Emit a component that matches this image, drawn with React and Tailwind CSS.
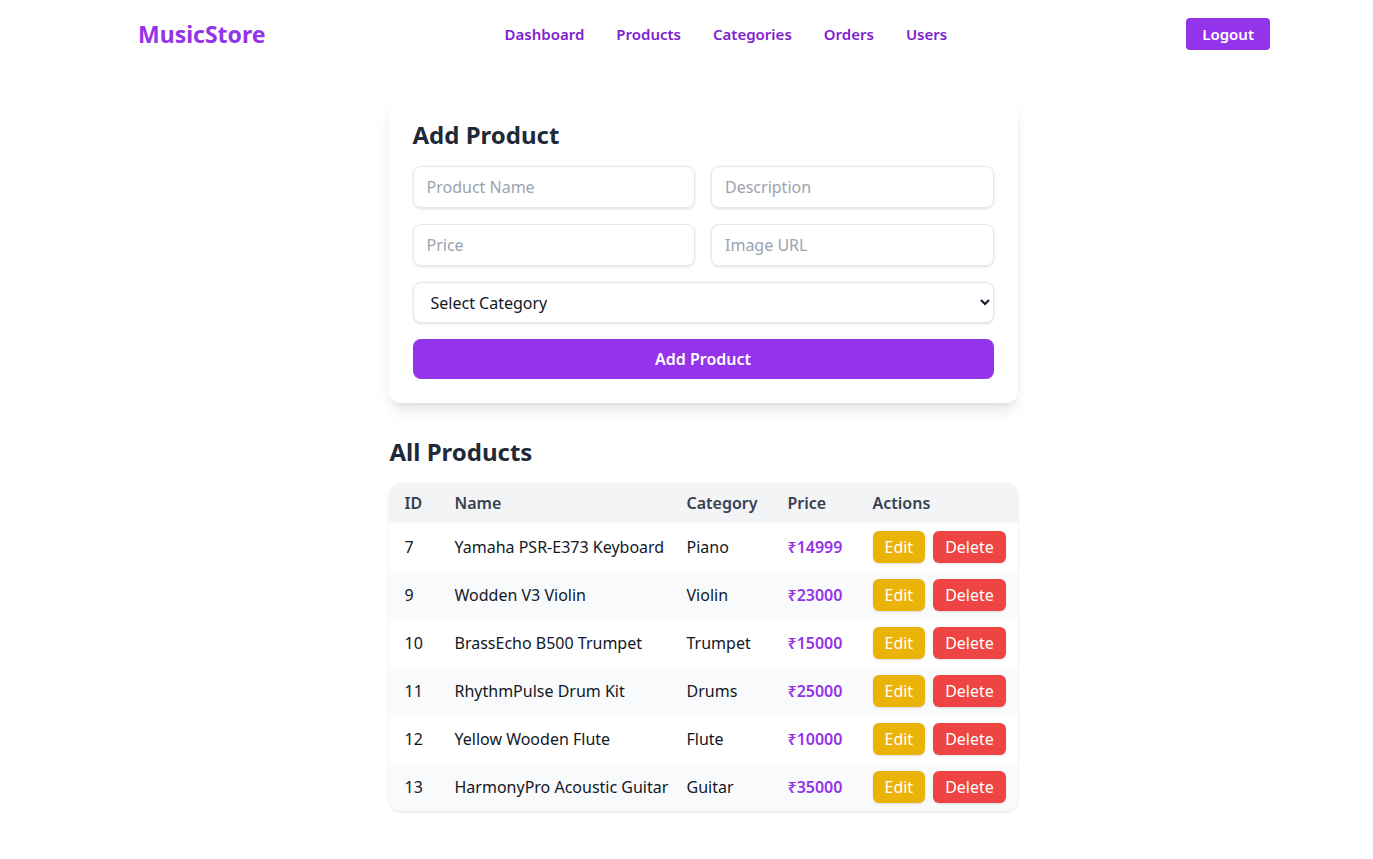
import React, { useState } from "react";

const products = [
  { id: 7, name: "Yamaha PSR-E373 Keyboard", category: "Piano", price: 14999 },
  { id: 9, name: "Wodden V3 Violin", category: "Violin", price: 23000 },
  { id: 10, name: "BrassEcho B500 Trumpet", category: "Trumpet", price: 15000 },
  { id: 11, name: "RhythmPulse Drum Kit", category: "Drums", price: 25000 },
  { id: 12, name: "Yellow Wooden Flute", category: "Flute", price: 10000 },
  { id: 13, name: "HarmonyPro Acoustic Guitar", category: "Guitar", price: 35000 },
];

const inputCls =
  "w-full h-[42px] px-[13px] rounded-lg border border-[#e5e7eb] shadow-sm text-base text-[#111827] placeholder:text-[#9ca3af] focus:outline-none";

const App = () => {
  const [form, setForm] = useState({ name: "", description: "", price: "", image: "", category: "" });

  const update = (key) => (e) => setForm({ ...form, [key]: e.target.value });

  return (
    <div className="min-h-screen bg-white font-['Noto_Sans',sans-serif] text-[#111827]">
      {/* Navbar */}
      <nav className="flex items-center justify-between pl-[138px] pr-[103px] py-[18px]">
        <span className="text-[23px] leading-8 font-bold text-[#9333ea]">MusicStore</span>
        <div className="flex items-center gap-8 text-[15px] leading-6 font-semibold text-[#7e22ce]">
          <a href="#">Dashboard</a>
          <a href="#">Products</a>
          <a href="#">Categories</a>
          <a href="#">Orders</a>
          <a href="#">Users</a>
        </div>
        <button className="h-8 px-4 rounded bg-[#9333ea] text-white font-semibold text-[15px] leading-6">Logout</button>
      </nav>

      <main className="flex justify-center pl-[33px] pt-[29px] pb-12">
        <div className="w-[629px]">
          {/* Add Product form */}
          <div className="bg-white rounded-xl shadow-lg p-6">
            <h2 className="text-2xl leading-7 font-bold text-[#1f2937] mb-[17px]">Add Product</h2>
            <div className="grid grid-cols-2 gap-4">
              <input className={inputCls} placeholder="Product Name" value={form.name} onChange={update("name")} />
              <input className={inputCls} placeholder="Description" value={form.description} onChange={update("description")} />
              <input className={inputCls} placeholder="Price" value={form.price} onChange={update("price")} />
              <input className={inputCls} placeholder="Image URL" value={form.image} onChange={update("image")} />
              <select
                className="col-span-2 h-[41px] px-[13px] rounded-lg border border-[#e5e7eb] shadow-sm text-base text-[#111827] bg-white"
                value={form.category}
                onChange={update("category")}
              >
                <option value="">Select Category</option>
                <option>Piano</option>
                <option>Violin</option>
                <option>Guitar</option>
              </select>
              <button className="col-span-2 h-10 rounded-lg bg-[#9333ea] text-white font-semibold">Add Product</button>
            </div>
          </div>

          {/* Product list */}
          <h2 className="text-2xl leading-8 font-bold text-[#1f2937] mt-[33px] mb-[15px] pl-px">All Products</h2>
          <div className="rounded-xl shadow overflow-hidden">
            <table className="w-full text-left table-fixed">
              <thead className="bg-[#f3f4f6] text-[#374151]">
                <tr className="h-10">
                  <th className="w-[50px] px-4 font-semibold">ID</th>
                  <th className="w-[232px] px-4 font-semibold">Name</th>
                  <th className="w-[101px] px-4 font-semibold">Category</th>
                  <th className="w-[85px] px-4 font-semibold">Price</th>
                  <th className="px-4 font-semibold">Actions</th>
                </tr>
              </thead>
              <tbody>
                {products.map((p, i) => (
                  <tr key={p.id} className={`h-12 ${i % 2 === 1 ? "bg-[#f9fafb]" : "bg-white"}`}>
                    <td className="px-4">{p.id}</td>
                    <td className="px-4 whitespace-nowrap">{p.name}</td>
                    <td className="px-4">{p.category}</td>
                    <td className="px-4 font-semibold text-[#9333ea]">₹{p.price}</td>
                    <td className="px-4">
                      <div className="flex gap-2">
                        <button className="h-8 px-3 rounded-md bg-[#eab308] text-white shadow-sm">Edit</button>
                        <button className="h-8 px-3 rounded-md bg-[#ef4444] text-white shadow-sm">Delete</button>
                      </div>
                    </td>
                  </tr>
                ))}
              </tbody>
            </table>
          </div>
        </div>
      </main>
    </div>
  );
};

export default App;
